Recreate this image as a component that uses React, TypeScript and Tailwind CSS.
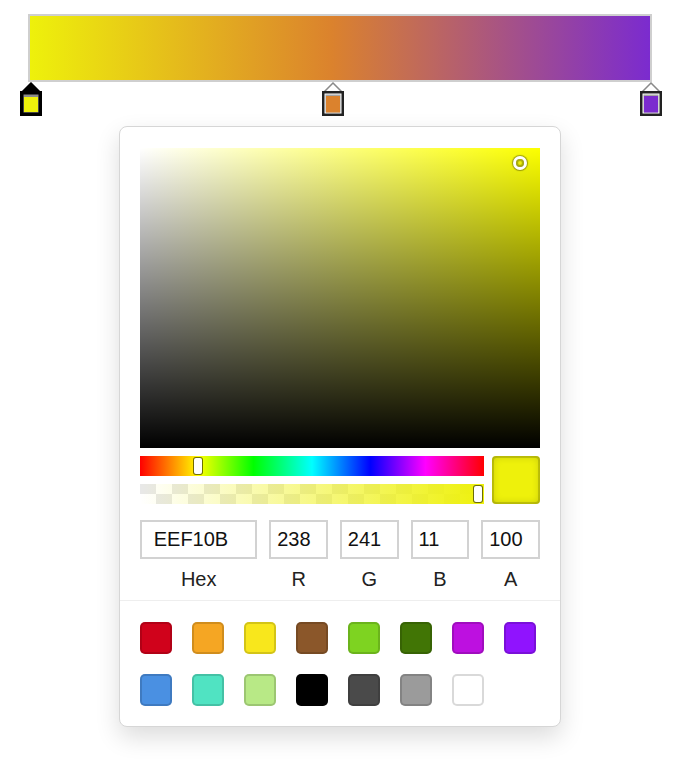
import React from "react";

const stops = [
  { pos: 0, color: "#eef10b", active: true },
  { pos: 48.7, color: "#db822d", active: false },
  { pos: 100, color: "#7b2bcf", active: false },
];

const swatches = [
  "#D0021B",
  "#F5A623",
  "#F8E71C",
  "#8B572A",
  "#7ED321",
  "#417505",
  "#BD10E0",
  "#9013FE",
  "#4A90E2",
  "#50E3C2",
  "#B8E986",
  "#000000",
  "#4A4A4A",
  "#9B9B9B",
  "#FFFFFF",
];

const fields = [
  { label: "Hex", value: "EEF10B", wide: true },
  { label: "R", value: "238" },
  { label: "G", value: "241" },
  { label: "B", value: "11" },
  { label: "A", value: "100" },
];

function Stop({ color, active }: { color: string; active: boolean }) {
  const dark = active ? "#000" : "#222";
  return (
    <svg width="22" height="34" viewBox="0 0 22 34">
      <path
        d="M1 11 L11 1 L21 11"
        fill={active ? "#000" : "#fff"}
        stroke={active ? "#000" : "#8a8a8a"}
        strokeWidth="1.5"
        strokeLinejoin="miter"
      />
      <rect x="1.25" y="10.25" width="19.5" height="22.5" fill={active ? "#000" : "#fff"} stroke={dark} strokeWidth="2.5" />
      <rect x="3.5" y="12.5" width="15" height="18" fill={active ? "#8c8c8c" : "#a5a5a5"} />
      <rect x="4" y={active ? 15 : 14} width="14" height={active ? 15 : 16.5} fill={color} />
    </svg>
  );
}

export default function App() {
  return (
    <div className="min-h-[770px] bg-white pt-[14px] font-['Liberation_Sans',Arial,sans-serif] text-[#222]">
      <div className="mx-auto w-[624px]">
        {/* gradient bar */}
        <div className="h-[68px] border-2 border-[#cfcfcf] bg-[linear-gradient(to_right,#eef10b_0%,#db822d_48.7%,#7b2bcf_100%)]" />

        {/* stops */}
        <div className="relative mx-[2px] h-[34px]">
          {stops.map((s) => (
            <div
              key={s.pos}
              className="absolute top-0 -ml-[10px]"
              style={{ left: `${s.pos}%` }}
            >
              <Stop color={s.color} active={s.active} />
            </div>
          ))}
        </div>
      </div>

      {/* picker */}
      <div className="mx-auto mt-[10px] w-[442px] rounded-[8px] border border-[#d6d6d6] bg-white px-[20px] pt-[21px] shadow-[0_10px_24px_rgba(0,0,0,0.14)]">
        <div className="relative h-[300px] bg-[#fcff00] bg-[linear-gradient(to_top,#000,transparent),linear-gradient(to_right,#fff,transparent)]">
          <div className="absolute left-[380px] top-[15px] h-[8px] w-[8px] -translate-x-1/2 -translate-y-1/2 rounded-full shadow-[0_0_0_3px_#fff,inset_0_0_1px_2px_rgba(0,0,0,0.3),0_0_1px_4px_rgba(0,0,0,0.35)]" />
        </div>

        <div className="mt-[8px] flex gap-[8px]">
          <div className="flex flex-1 flex-col gap-[8px]">
            <div className="relative h-[20px] bg-[linear-gradient(to_right,#f00_0%,#ff0_17%,#0f0_33%,#0ff_50%,#00f_67%,#f0f_83%,#f00_100%)]">
              <div className="absolute left-[54px] top-[2px] h-[16px] w-[8px] rounded-[2px] bg-white shadow-[0_0_0_1px_rgba(0,0,0,0.55)]" />
            </div>
            <div className="relative h-[20px] bg-[repeating-conic-gradient(#fff_0_25%,#e8e8e8_0_50%)] bg-[length:32px_20px]">
              <div className="h-full bg-[linear-gradient(to_right,rgba(238,241,11,0),rgb(238,241,11))]" />
              <div className="absolute left-[334px] top-[2px] h-[16px] w-[8px] rounded-[2px] bg-white shadow-[0_0_0_1px_rgba(0,0,0,0.55)]" />
            </div>
          </div>
          <div className="h-[48px] w-[48px] rounded-[4px] bg-[#eef10b] shadow-[inset_0_0_0_2px_rgba(0,0,0,0.15),inset_0_0_8px_rgba(0,0,0,0.2)]" />
        </div>

        {/* fields */}
        <div className="mt-[16px] flex">
          {fields.map((f) => (
            <div key={f.label} className={f.wide ? "flex-[2]" : "flex-1 pl-[12px]"}>
              <div className="flex h-[39px] items-center border-2 border-[#d2d2d2] pl-[10%] text-[20px] leading-[23px] text-[#111]">
                {f.value}
              </div>
              <div className="pb-[9px] pt-[9px] text-center text-[20px] leading-[23px] text-[#222]">
                {f.label}
              </div>
            </div>
          ))}
        </div>

        {/* swatches */}
        <div className="-mx-[20px] flex flex-wrap border-t border-[#eee] pl-[20px] pt-[21px]">
          {swatches.map((c) => (
            <div
              key={c}
              className="mb-[20px] mr-[20px] h-[32px] w-[32px] rounded-[5px] shadow-[inset_0_0_0_2px_rgba(0,0,0,0.15)]"
              style={{ backgroundColor: c }}
            />
          ))}
        </div>
      </div>
    </div>
  );
}
